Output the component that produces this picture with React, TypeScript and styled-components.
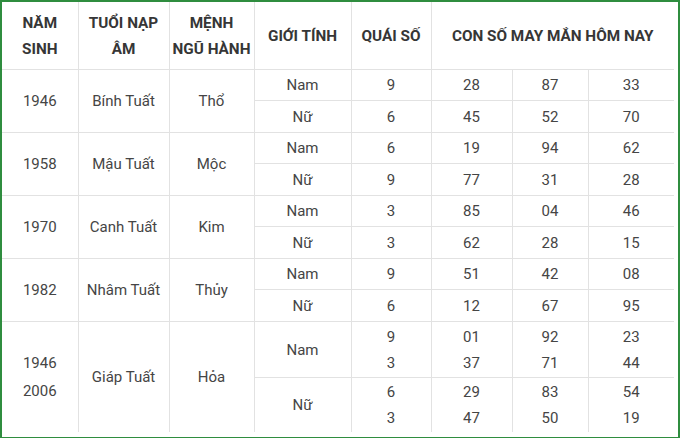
import React from 'react';
import styled, { createGlobalStyle } from 'styled-components';

const GlobalStyle = createGlobalStyle`
  html, body {
    margin: 0;
    padding: 0;
    background: #ffffff;
  }
  body {
    font-family: Roboto, "Noto Sans", "Liberation Sans", sans-serif;
  }
`;

const Frame = styled.div`
  width: 676px;
  height: 435px;
  border: 2px solid #2f8d3f;
  background: #fff;
  overflow: hidden;
`;

const Table = styled.table`
  width: 672px;
  border-collapse: collapse;
  border-style: hidden;
  table-layout: fixed;
  color: #454545;
  font-size: 15px;
`;

const Col = styled.col<{ $w: number }>`
  width: ${(p) => p.$w}px;
`;

const HeadCell = styled.th`
  border: 1px solid #e2e2e2;
  height: 67px;
  padding: 0;
  font-weight: 700;
  font-size: 15.3px;
  line-height: 26px;
  color: #363636;
  text-align: center;
  vertical-align: middle;
`;

const Cell = styled.td<{ $h: number; $lh?: number }>`
  border: 1px solid #e2e2e2;
  padding: 0;
  height: ${(p) => p.$h}px;
  line-height: ${(p) => p.$lh ?? 26}px;
  text-align: center;
  vertical-align: middle;
`;

type Sub = { gender: string; quai: string[]; nums: string[][]; h: number };
type Group = { year: string[]; napAm: string; menh: string; rows: Sub[] };

const pair = (a: Omit<Sub, 'h'>, b: Omit<Sub, 'h'>, ha = 30, hb = 31): Sub[] => [
  { ...a, h: ha },
  { ...b, h: hb },
];

const data: Group[] = [
  {
    year: ['1946'], napAm: 'Bính Tuất', menh: 'Thổ',
    rows: pair(
      { gender: 'Nam', quai: ['9'], nums: [['28', '87', '33']] },
      { gender: 'Nữ', quai: ['6'], nums: [['45', '52', '70']] },
    ),
  },
  {
    year: ['1958'], napAm: 'Mậu Tuất', menh: 'Mộc',
    rows: pair(
      { gender: 'Nam', quai: ['6'], nums: [['19', '94', '62']] },
      { gender: 'Nữ', quai: ['9'], nums: [['77', '31', '28']] },
    ),
  },
  {
    year: ['1970'], napAm: 'Canh Tuất', menh: 'Kim',
    rows: pair(
      { gender: 'Nam', quai: ['3'], nums: [['85', '04', '46']] },
      { gender: 'Nữ', quai: ['3'], nums: [['62', '28', '15']] },
    ),
  },
  {
    year: ['1982'], napAm: 'Nhâm Tuất', menh: 'Thủy',
    rows: pair(
      { gender: 'Nam', quai: ['9'], nums: [['51', '42', '08']] },
      { gender: 'Nữ', quai: ['6'], nums: [['12', '67', '95']] },
    ),
  },
  {
    year: ['1946', '2006'], napAm: 'Giáp Tuất', menh: 'Hỏa',
    rows: pair(
      { gender: 'Nam', quai: ['9', '3'], nums: [['01', '92', '23'], ['37', '71', '44']] },
      { gender: 'Nữ', quai: ['6', '3'], nums: [['29', '83', '54'], ['47', '50', '19']] },
      55,
      54,
    ),
  },
];

const colWidths = [76, 91, 85, 97, 80, 81, 76, 86];

const lines = (items: string[]) =>
  items.map((t, i) => (
    <React.Fragment key={i}>
      {i > 0 && <br />}
      {t}
    </React.Fragment>
  ));

export default function App() {
  return (
    <>
      <GlobalStyle />
      <Frame>
        <Table>
          <colgroup>
            {colWidths.map((w, i) => (
              <Col key={i} $w={w} />
            ))}
          </colgroup>
          <thead>
            <tr>
              <HeadCell>NĂM<br />SINH</HeadCell>
              <HeadCell>TUỔI NẠP<br />ÂM</HeadCell>
              <HeadCell>MỆNH<br />NGŨ HÀNH</HeadCell>
              <HeadCell>GIỚI TÍNH</HeadCell>
              <HeadCell>QUÁI SỐ</HeadCell>
              <HeadCell colSpan={3}>CON SỐ MAY MẮN HÔM NAY</HeadCell>
            </tr>
          </thead>
          <tbody>
            {data.map((g) =>
              g.rows.map((r, ri) => (
                <tr key={g.napAm + ri}>
                  {ri === 0 && (
                    <>
                      <Cell rowSpan={2} $h={r.h} $lh={28}>{lines(g.year)}</Cell>
                      <Cell rowSpan={2} $h={r.h}>{g.napAm}</Cell>
                      <Cell rowSpan={2} $h={r.h}>{g.menh}</Cell>
                    </>
                  )}
                  <Cell $h={r.h}>{r.gender}</Cell>
                  <Cell $h={r.h}>{lines(r.quai)}</Cell>
                  {[0, 1, 2].map((c) => (
                    <Cell key={c} $h={r.h}>
                      {lines(r.nums.map((n) => n[c]))}
                    </Cell>
                  ))}
                </tr>
              ))
            )}
          </tbody>
        </Table>
      </Frame>
    </>
  );
}
